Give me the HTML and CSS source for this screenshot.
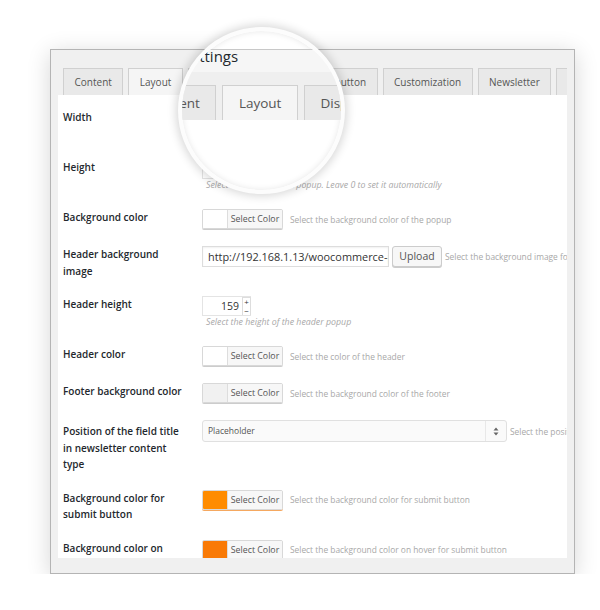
FILE: index.html
```html
<!DOCTYPE html>
<html lang="en">
<head>
<meta charset="UTF-8">
<meta name="viewport" content="width=device-width, initial-scale=1.0">
<title>Popup Settings - Layout</title>
<link rel="stylesheet" href="styles.css">
</head>
<body>

<div class="window">
    <!-- Tab bar -->
    <div class="window-head">
        <div class="tabs">
            <span class="tab">Content</span>
            <span class="tab active">Layout</span>
            <span class="tab">Display options</span>
            <span class="tab">Submit button</span>
            <span class="tab">Customization</span>
            <span class="tab">Newsletter</span>
            <span class="tab">Email</span>
        </div>
    </div>

    <!-- Layout options -->
    <div class="panel">

        <div class="row">
            <div class="label">Width</div>
            <div class="field">
                <div class="line">
                    <span class="number"><span class="num-value">550</span><span class="spin"><i>+</i><i>&minus;</i></span></span>
                </div>
                <div class="note">Select the width of the popup</div>
            </div>
        </div>

        <div class="row">
            <div class="label">Height</div>
            <div class="field">
                <div class="line">
                    <span class="number"><span class="num-value">0</span><span class="spin"><i>+</i><i>&minus;</i></span></span>
                </div>
                <div class="note">Select the height of the popup. Leave 0 to set it automatically</div>
            </div>
        </div>

        <div class="row">
            <div class="label">Background color</div>
            <div class="field">
                <div class="line">
                    <span class="picker"><span class="swatch"></span><span class="picker-btn">Select Color</span></span>
                    <span class="help">Select the background color of the popup</span>
                </div>
            </div>
        </div>

        <div class="row">
            <div class="label">Header background image</div>
            <div class="field">
                <div class="line">
                    <span class="text-input">http://192.168.1.13/woocommerce-popup/wp-content/uploads/header.jpg</span>
                    <span class="button">Upload</span>
                    <span class="help help-tight">Select the background image for the header</span>
                </div>
            </div>
        </div>

        <div class="row">
            <div class="label">Header height</div>
            <div class="field">
                <div class="line">
                    <span class="number"><span class="num-value">159</span><span class="spin"><i>+</i><i>&minus;</i></span></span>
                </div>
                <div class="note">Select the height of the header popup</div>
            </div>
        </div>

        <div class="row">
            <div class="label">Header color</div>
            <div class="field">
                <div class="line">
                    <span class="picker"><span class="swatch"></span><span class="picker-btn">Select Color</span></span>
                    <span class="help">Select the color of the header</span>
                </div>
            </div>
        </div>

        <div class="row">
            <div class="label">Footer background color</div>
            <div class="field">
                <div class="line">
                    <span class="picker"><span class="swatch swatch-grey"></span><span class="picker-btn">Select Color</span></span>
                    <span class="help">Select the background color of the footer</span>
                </div>
            </div>
        </div>

        <div class="row row-select">
            <div class="label">Position of the field title in newsletter content type</div>
            <div class="field">
                <div class="line">
                    <span class="select">
                        <span class="select-value">Placeholder</span>
                        <span class="select-arrow">
                            <svg width="6" height="9" viewBox="0 0 6 9"><path d="M3 0.5 L5.5 3.5 H0.5 Z M3 8.5 L5.5 5.5 H0.5 Z" fill="#666"/></svg>
                        </span>
                    </span>
                    <span class="help help-tight">Select the position of the field title</span>
                </div>
            </div>
        </div>

        <div class="row">
            <div class="label">Background color for submit button</div>
            <div class="field">
                <div class="line">
                    <span class="picker picker-orange"><span class="swatch swatch-orange"></span><span class="picker-btn">Select Color</span></span>
                    <span class="help">Select the background color for submit button</span>
                </div>
            </div>
        </div>

        <div class="row">
            <div class="label">Background color on hover for submit button</div>
            <div class="field">
                <div class="line">
                    <span class="picker picker-orange"><span class="swatch swatch-dark-orange"></span><span class="picker-btn">Select Color</span></span>
                    <span class="help">Select the background color on hover for submit button</span>
                </div>
            </div>
        </div>

    </div>
    <div class="window-foot"></div>
</div>

<!-- Magnifying glass over the tabs -->
<div class="lens">
    <div class="lens-view">
        <div class="lens-title">Popup Settings</div>
        <div class="lens-tabs">
            <span class="lens-tab">Content</span>
            <span class="lens-tab active">Layout</span>
            <span class="lens-tab">Display</span>
        </div>
    </div>
</div>

</body>
</html>
```

FILE: styles.css
```css
/* BASE */
* {
    box-sizing: border-box;
}
body {
    margin: 0;
    font-family: "Open Sans", "Liberation Sans", sans-serif;
    color: #23282d;
    background-color: #fff;
}

/* WINDOW */
.window {
    width: 525px;
    height: 525px;
    margin: 49px 0 0 50px;
    border: 1px solid #b4b4b4;
    background-color: #f0f0f0;
    box-shadow: 0 4px 22px rgba(0, 0, 0, 0.16);
    display: flex;
    flex-direction: column;
}
.window-head {
    height: 45px;
    padding: 18px 7px 0 7px;
}
.window-foot {
    flex: 1;
}

/* TABS */
.tabs {
    display: flex;
    height: 27px;
    padding-left: 5px;
    overflow: hidden;
}
.tab {
    flex: none;
    padding: 0 10.5px;
    margin-right: 5px;
    border: 1px solid #d0d0d0;
    border-bottom: 0;
    background-color: #e9e9e9;
    font-size: 10px;
    line-height: 26px;
    color: #555;
}
.tab.active {
    background-color: #f5f5f5;
}

/* PANEL */
.panel {
    height: 463px;
    margin: 0 7px;
    padding: 14px 0 0 5px;
    background-color: #fff;
    overflow: hidden;
}
.row {
    display: flex;
    margin-bottom: 17px;
}
.label {
    flex: none;
    width: 139px;
    padding-right: 17px;
    font-size: 10px;
    font-weight: 600;
    line-height: 16.5px;
}
.row-select .label {
    padding-top: 3px;
}
.field {
    flex: 1;
    min-width: 0;
}
.line {
    display: flex;
    align-items: center;
    white-space: nowrap;
}
.help {
    margin-left: 7px;
    font-size: 8.4px;
    color: #a8a8a8;
}
.help-tight {
    margin-left: 3px;
}
.note {
    padding-left: 4px;
    font-size: 8.8px;
    font-style: italic;
    line-height: 13px;
    color: #a8a8a8;
    white-space: nowrap;
}

/* NUMBER INPUT */
.number {
    display: flex;
    width: 49px;
    height: 20px;
    border: 1px solid #e4e4e4;
    border-right: 0;
}
.num-value {
    flex: 1;
    padding-right: 3px;
    text-align: right;
    font-size: 10.5px;
    line-height: 19px;
    color: #333;
}
.spin {
    width: 9px;
    display: flex;
    flex-direction: column;
    border: 1px solid #ddd;
    border-bottom: 0;
}
.spin i {
    flex: 1;
    font-style: normal;
    font-size: 8px;
    line-height: 8px;
    text-align: center;
    color: #333;
}

/* COLOR PICKER */
.picker {
    display: flex;
    height: 20px;
    border: 1px solid #d8d8d8;
    border-radius: 2px;
    box-shadow: 0 1px 0 #ccc;
    overflow: hidden;
}
.picker-orange {
    box-shadow: 0 1px 0 #f5a860;
}
.swatch {
    width: 24px;
    background-color: #fff;
}
.swatch-grey {
    background-color: #f1f1f1;
}
.swatch-orange {
    background-color: #ff8c00;
}
.swatch-dark-orange {
    background-color: #f97a06;
}
.picker-btn {
    width: 55px;
    border-left: 1px solid #ddd;
    background-color: #f7f7f7;
    text-align: center;
    font-size: 8.8px;
    line-height: 18px;
    color: #555;
}

/* TEXT INPUT + BUTTON */
.text-input {
    flex: none;
    width: 187px;
    height: 21px;
    padding: 0 5px;
    border: 1px solid #ddd;
    box-shadow: inset 0 1px 2px rgba(0, 0, 0, 0.06);
    overflow: hidden;
    font-size: 10.9px;
    line-height: 19px;
    color: #333;
}
.button {
    flex: none;
    width: 50px;
    height: 21px;
    margin-left: 3px;
    border: 1px solid #ccc;
    border-radius: 3px;
    background-color: #f7f7f7;
    box-shadow: 0 1px 0 #ccc;
    text-align: center;
    font-size: 10.5px;
    line-height: 19px;
    color: #555;
}

/* SELECT */
.select {
    flex: none;
    display: flex;
    width: 305px;
    height: 22px;
    border: 1px solid #e0e0e0;
    border-radius: 3px;
    background-color: #fafafa;
}
.select-value {
    flex: 1;
    padding-left: 5px;
    font-size: 8.5px;
    line-height: 20px;
    color: #555;
}
.select-arrow {
    width: 21px;
    border-left: 1px solid #e8e8e8;
    display: flex;
    align-items: center;
    justify-content: center;
}

/* MAGNIFIER */
.lens {
    position: absolute;
    left: 178px;
    top: 27px;
    width: 167px;
    height: 167px;
    border: 4px solid #fcfcfc;
    border-radius: 50%;
    background-color: #fff;
    overflow: hidden;
    box-shadow: 0 0 10px 2px rgba(0, 0, 0, 0.16), inset 0 0 6px rgba(0, 0, 0, 0.1);
}
.lens-view {
    position: absolute;
    left: -49px;
    top: 18px;
    width: 420px;
    height: 71px;
    border-top: 1px solid #c8c8c8;
    background-color: #f6f6f6;
}
.lens-title {
    margin-top: -3px;
    padding-left: 0;
    font-size: 15px;
    line-height: 18px;
    white-space: nowrap;
}
.lens-tabs {
    display: flex;
    margin-top: 7px;
    padding-top: 13px;
    background-color: #efefef;
}
.lens-tab {
    flex: none;
    margin-right: 6px;
    padding: 0 15.5px;
    border: 1px solid #d0d0d0;
    border-bottom: 0;
    background-color: #e9e9e9;
    font-size: 13.5px;
    line-height: 34px;
    color: #555;
}
.lens-tab.active {
    background-color: #f5f5f5;
}
```
